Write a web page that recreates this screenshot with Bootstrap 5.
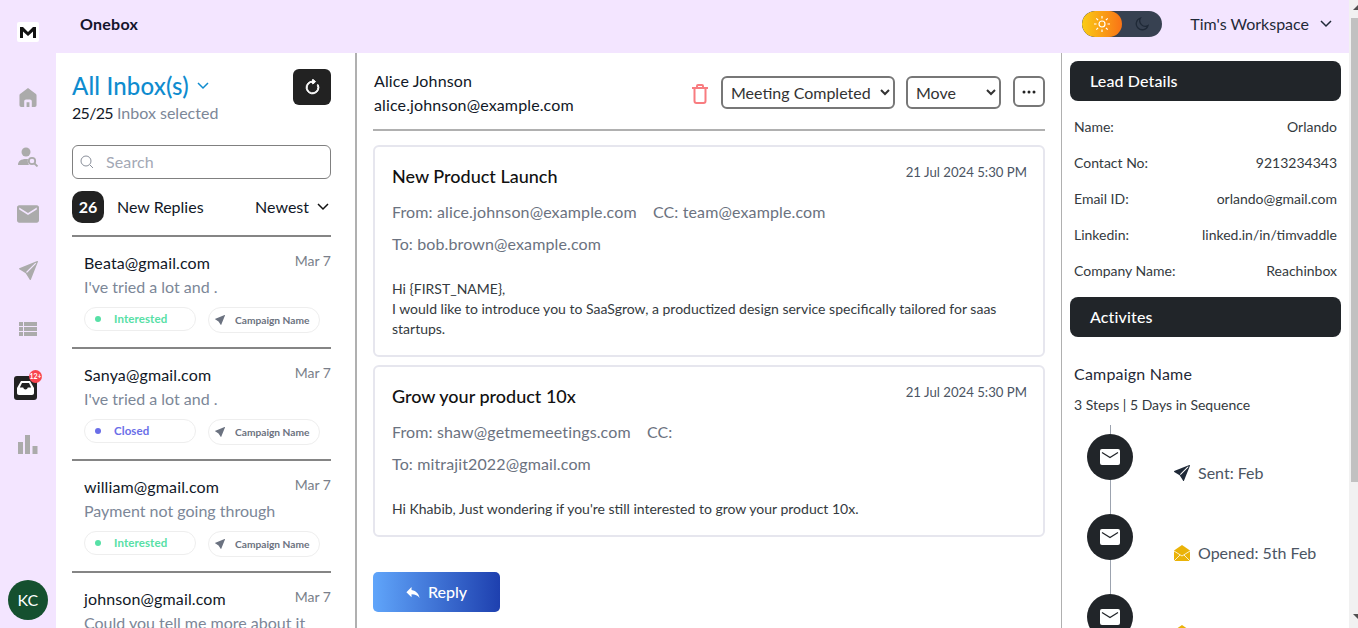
<!DOCTYPE html>
<html lang="en">
<head>
    <meta charset="UTF-8">
    <meta name="viewport" content="width=device-width, initial-scale=1.0">
    <title>Onebox</title>
    <link rel="stylesheet" href="https://cdn.jsdelivr.net/npm/bootstrap@5.3.3/dist/css/bootstrap.min.css">
    <style>
        body { font-family: "Lato", "Liberation Sans", sans-serif; font-size: 16px; line-height: 24px; color: #111827; background: #fff; letter-spacing: .13px; }
        .page-shell { height: 100vh; }
        .rail { width: 56px; background: #f3e5ff; padding-top: 22px; }
        .rail-logo { width: 22px; height: 20px; background: #fff; border-radius: 2px; margin-bottom: 42px; }
        .rail-ic { height: 24px; margin-bottom: 33.500px; color: #ababab; }
        .ic-home { margin-bottom: 35.500px; }
        .ic-person, .ic-mail { margin-bottom: 32.500px; }
        .ic-send, .ic-list { margin-bottom: 34.500px; }
        .rail-inbox { position: relative; width: 23px; height: 24px; background: #222; border-radius: 3px; margin: 2px 0 31px -5px; }
        .rail-badge { position: absolute; top: -6px; right: -5px; width: 13px; height: 13px; border-radius: 50%; background: #f8444f; color: #fff; font-size: 7px; line-height: 13px; text-align: center; letter-spacing: 0; font-weight: 700; }
        .rail-avatar { width: 40px; height: 40px; border-radius: 50%; background: #15502f; color: #fff; font-size: 16px; line-height: 40px; text-align: center; margin-top: auto; margin-bottom: 8px; }
        .topbar { height: 53px; background: #f3e5ff; padding: 0 17px 5px 24px; }
        .brand { font-weight: 700; color: #14142b; letter-spacing: .25px; }
        .mode-toggle { width: 80px; height: 26px; border-radius: 13px; background: #374151; margin-right: 28px; overflow: hidden; }
        .mode-sun { width: 40px; height: 26px; border-radius: 13px; background: linear-gradient(90deg, #facc15, #f97316); }
        .workspace { color: #1f2937; letter-spacing: 0; margin-right: 11px; }

        .inbox-col { width: 301px; padding: 16px 24px 0 16px; border-right: 2px solid #b0b0b0; }
        .inbox-title { font-size: 24px; line-height: 32px; font-weight: 500; color: #0f8ccf; letter-spacing: .15px; margin-top: 1px; margin-bottom: -1px; }
        .refresh-btn { width: 38px; height: 36px; background: #222; border-radius: 6px; border: 0; padding: 0; }
        .inbox-count { letter-spacing: 0; }
        .count-num { letter-spacing: -.7px; }
        .muted-blue { color: #7c8798; }
        .search-box { height: 34px; margin-top: 20px; margin-bottom: 12px; border: 1px solid #808080; border-radius: 6px; padding: 0 7px; color: #a3a8b5; }
        .count-pill { width: 32px; height: 32px; border-radius: 10px; background: #222; color: #fff; line-height: 32px; text-align: center; font-weight: 700; margin-right: 13px; letter-spacing: 0; }
        .sort-row { margin-bottom: 12px; letter-spacing: 0; }
        .sort-chev { margin-left: 8px; margin-right: 2px; }
        .thread { height: 112px; border-top: 2px solid #858585; padding: 14px 0 0 12px; }
        .thread:first-of-type { border-top-color: #b0b0b0; }
        .thread-date { font-size: 14px; color: #7a7f8a; margin-top: -2px; letter-spacing: 0; }
        .thread-sub { color: #7c8798; letter-spacing: 0; }
        .chip { width: 112px; height: 24px; border: 1px solid #eeeeee; border-radius: 13px; font-size: 11.500px; line-height: 22px; font-weight: 700; margin-top: 8px; letter-spacing: .1px; }
        .chip-camp { height: 26px; color: #6b7280; padding-left: 6px; font-size: 10.200px; letter-spacing: 0; }
        .chip-camp svg { margin-right: 10px; }
        .chip-status { padding-left: 10px; }
        .chip-dot { width: 6px; height: 6px; border-radius: 50%; margin-right: 13px; background: currentColor; }
        .st-green { color: #57e0a6; }
        .st-blue { color: #6a6ee8; }

        .mail-col { width: 705px; padding: 16px 16px 0; border-right: 1px solid #b0b0b0; }
        .mail-head { padding-bottom: 12px; padding-left: 1px; border-bottom: 2px solid #b0b0b0; margin-bottom: 14px; height: 62px; }
        .mail-actions { margin-top: 7px; }
        .trash-ic { margin-top: 8px; }
        .act-select { height: 33px; border: 2px solid #777; border-radius: 6px; background: #fff; font: inherit; color: #333; padding: 0 2px 0 4px; }
        .dots-btn { width: 32px; height: 31px; border: 2px solid #777; border-radius: 6px; background: #fff; padding: 0; }
        .mail-card { border: 2px solid #e6e6ee; border-radius: 6px; padding: 18px 16px 16px 17px; margin-bottom: 8px; }
        .mail-title { font-size: 18px; font-weight: 500; color: #111; letter-spacing: 0; margin-top: -1px; margin-bottom: 1px; }
        .mail-date { font-size: 13.200px; color: #4b5563; margin-top: -5px; letter-spacing: 0; }
        .mail-meta { color: #6b7280; margin-top: 11px; margin-bottom: 8px; }
        .mail-meta + .mail-meta { margin-top: 0; }
        .mail-body { font-size: 14px; line-height: 20px; color: #343a40; margin-top: 23px; letter-spacing: 0; }
        .reply-btn { width: 127px; height: 40px; margin-top: 35px; border: 0; border-radius: 5px; background: linear-gradient(90deg, #60a5fa, #1e40af); color: #fff; font-weight: 500; }

        .lead-col { width: 287px; padding: 8px 8px 0; }
        .lead-bar { height: 40px; background: #212529; color: #fff; border-radius: 8px; line-height: 40px; padding-left: 20px; font-weight: 500; }
        .lead-row { height: 36px; padding: 0 4px; font-size: 14px; color: #343a40; letter-spacing: 0; }
        .lead-rows { margin-bottom: 8px; margin-top: 8px; }
        .camp-title { margin: 25px 4px 0; color: #1f2937; letter-spacing: .2px; }
        .camp-steps { margin: 9px 4px 10px; font-size: 14px; line-height: 20px; color: #343a40; letter-spacing: 0; }
        .tl-step { height: 80px; margin-left: 17px; }
        .tl-rail { width: 46px; margin-right: 41px; }
        .tl-line { width: 1px; background: #9ca3af; flex-grow: 1; }
        .tl-line-top { height: 9px; flex-grow: 0; }
        .tl-circle { width: 46px; height: 46px; border-radius: 50%; background: #212529; }
        .tl-label { margin-top: 36px; color: #4b5563; height: 24px; letter-spacing: 0; }

        .scroll-track { width: 9px; background: #f1f1f1; padding-left: 2px; }
        .scroll-thumb { height: 464px; margin-top: 8px; background: #c1c1c1; }
        .scroll-arrow { height: 10px; }
    </style>
</head>
<body>
    <div class="page-shell d-flex overflow-hidden">
        <div class="rail d-flex flex-column align-items-center flex-shrink-0">
            <div class="rail-logo d-flex align-items-center justify-content-center">
                <svg width="16" height="11" viewBox="0 0 16 11"><path d="M0 11V0h3l5 5 5-5h3v11h-3V4.500L8 9 3 4.500V11z" fill="#111"/></svg>
            </div>
            <div class="rail-ic ic-home"><svg width="18" height="19" viewBox="0 0 18 20"><path d="M9 0l8 6c.7.5 1 1 1 2v10c0 1.200-.8 2-2 2h-3v-6c0-1-.6-2-2-2H7c-1.400 0-2 1-2 2v6H2c-1.200 0-2-.8-2-2V8c0-1 .3-1.500 1-2z" fill="currentColor"/><path d="M7.500 15h3v5h-3z" fill="currentColor"/></svg></div>
            <div class="rail-ic ic-person"><svg width="22" height="20" viewBox="0 0 22 20"><circle cx="9" cy="5" r="4.500" fill="currentColor"/><path d="M1 18c0-4 3-6 8-6 1 0 1.500 0 2 .2-.6 2 0 4 1 5.800z" fill="currentColor"/><circle cx="15" cy="14" r="3.200" fill="none" stroke="currentColor" stroke-width="1.800"/><path d="M17.500 16.500l3 3" stroke="currentColor" stroke-width="1.800"/></svg></div>
            <div class="rail-ic ic-mail"><svg width="22" height="22" viewBox="2 4 20 16"><path fill="currentColor" d="M20 4H4c-1.100 0-2 .9-2 2v12c0 1.100.9 2 2 2h16c1.100 0 2-.9 2-2V6c0-1.100-.9-2-2-2zm0 4l-8 5-8-5V6l8 5 8-5v2z"/></svg></div>
            <div class="rail-ic ic-send"><svg width="19" height="19" viewBox="0 0 16 16"><path fill="currentColor" d="M15.964.686a.5.5 0 0 0-.65-.65L.767 5.855H.766l-.452.18a.5.5 0 0 0-.082.887l.41.26.001.002 4.995 3.178 3.178 4.995.002.002.26.41a.5.5 0 0 0 .886-.083l6-15Zm-1.833 1.89L6.637 10.070l-.215-.338a.5.5 0 0 0-.154-.154l-.338-.215 7.494-7.494 1.178-.471-.47 1.178Z"/></svg></div>
            <div class="rail-ic ic-list"><svg width="18" height="14" viewBox="0 0 18 14" fill="currentColor"><rect width="4" height="4"/><rect x="5" width="13" height="4"/><rect y="5" width="4" height="4"/><rect x="5" y="5" width="13" height="4"/><rect y="10" width="4" height="4"/><rect x="5" y="10" width="13" height="4"/></svg></div>
            <div class="rail-inbox d-flex align-items-center justify-content-center">
                <svg width="17" height="14" viewBox="0 0 17 14"><path fill="#fff" d="M4 0h9l4 7v5c0 1.200-.8 2-2 2H2c-1.200 0-2-.8-2-2V7zm1 2L2.800 6.500h3.400c.3 1.300 1.200 2 2.300 2s2-.7 2.300-2h3.400L12 2z"/></svg>
                <span class="rail-badge">12+</span>
            </div>
            <div class="rail-ic"><svg width="20" height="19" viewBox="0 0 20 19" fill="currentColor"><rect y="7" width="5" height="12"/><rect x="7" width="5" height="19"/><rect x="14.500" y="11" width="5" height="8"/></svg></div>
            <div class="rail-avatar">KC</div>
        </div>

        <div class="flex-grow-1 d-flex flex-column" style="min-width:0">
            <div class="topbar d-flex align-items-center justify-content-between flex-shrink-0">
                <span class="brand">Onebox</span>
                <div class="d-flex align-items-center">
                    <div class="mode-toggle d-flex align-items-center">
                        <div class="mode-sun d-flex align-items-center justify-content-center">
                            <svg width="16" height="16" viewBox="0 0 16 16" fill="none" stroke="#fff" stroke-width="1.200"><circle cx="8" cy="8" r="3"/><path d="M8 0v2.500M8 13.500V16M0 8h2.500M13.500 8H16M2.300 2.300l1.800 1.800M11.900 11.900l1.800 1.800M2.300 13.700l1.800-1.800M11.900 4.100l1.800-1.800"/></svg>
                        </div>
                        <div class="flex-grow-1 d-flex justify-content-center">
                            <svg width="14" height="14" viewBox="0 0 14 14" fill="none" stroke="#1f2937" stroke-width="1.300"><path d="M5.500 1a6 6 0 1 0 7.500 7.500A5.500 5.500 0 0 1 5.500 1z"/></svg>
                        </div>
                    </div>
                    <span class="workspace">Tim's Workspace</span>
                    <svg width="12" height="8" viewBox="0 0 12 8" fill="none" stroke="#1f2937" stroke-width="1.500"><path d="M1 1l5 5 5-5"/></svg>
                </div>
            </div>

            <div class="d-flex flex-grow-1 overflow-hidden">
                <!-- lista -->
                <div class="inbox-col flex-shrink-0 overflow-hidden">
                    <div class="d-flex justify-content-between align-items-start">
                        <div>
                            <div class="inbox-title d-flex align-items-center">All Inbox(s)
                                <svg class="ms-2" width="12" height="8" viewBox="0 0 12 8" fill="none" stroke="#0f8ccf" stroke-width="1.500"><path d="M1 1l5 5 5-5"/></svg>
                            </div>
                            <div class="inbox-count"><span class="count-num">25/25</span> <span class="muted-blue">Inbox selected</span></div>
                        </div>
                        <button class="refresh-btn d-flex align-items-center justify-content-center" type="button">
                            <svg width="17" height="17" viewBox="0 0 16 16" fill="#fff" stroke="#fff" stroke-width=".9"><path d="M8 3a5 5 0 1 0 4.546 2.914.5.5 0 0 1 .908-.417A6 6 0 1 1 8 2v1z"/><path d="M8 4.466V.534a.25.25 0 0 1 .41-.192l2.360 1.966c.12.1.12.284 0 .384L8.410 4.658A.25.25 0 0 1 8 4.466z"/></svg>
                        </button>
                    </div>
                    <div class="search-box d-flex align-items-center">
                        <svg class="me-2" width="14" height="14" viewBox="0 0 14 14" fill="none" stroke="#8a8f9a"><circle cx="6" cy="6" r="5"/><path d="M10 10l3 3"/></svg>
                        <span class="ms-1">Search</span>
                    </div>
                    <div class="sort-row d-flex align-items-center">
                        <span class="count-pill">26</span>
                        <span>New Replies</span>
                        <span class="ms-auto">Newest</span>
                        <svg class="sort-chev" width="12" height="8" viewBox="0 0 12 8" fill="none" stroke="#111" stroke-width="1.500"><path d="M1 1l5 5 5-5"/></svg>
                    </div>

                    <div class="thread">
                        <div class="d-flex justify-content-between"><span>Beata@gmail.com</span><span class="thread-date">Mar 7</span></div>
                        <div class="thread-sub">I've tried a lot and .</div>
                        <div class="d-flex gap-2">
                            <div class="chip chip-status st-green d-flex align-items-center"><span class="chip-dot"></span>Interested</div>
                            <div class="chip chip-camp d-flex align-items-center ms-1"><svg width="10" height="10" viewBox="0 0 16 16"><path fill="#6b7280" d="M15.964.686a.5.5 0 0 0-.65-.65L.767 5.855l-.453.18a.5.5 0 0 0-.082.887l5.406 3.440 3.440 5.406a.5.5 0 0 0 .886-.083z"/></svg>Campaign Name</div>
                        </div>
                    </div>
                    <div class="thread">
                        <div class="d-flex justify-content-between"><span>Sanya@gmail.com</span><span class="thread-date">Mar 7</span></div>
                        <div class="thread-sub">I've tried a lot and .</div>
                        <div class="d-flex gap-2">
                            <div class="chip chip-status st-blue d-flex align-items-center"><span class="chip-dot"></span>Closed</div>
                            <div class="chip chip-camp d-flex align-items-center ms-1"><svg width="10" height="10" viewBox="0 0 16 16"><path fill="#6b7280" d="M15.964.686a.5.5 0 0 0-.65-.65L.767 5.855l-.453.18a.5.5 0 0 0-.082.887l5.406 3.440 3.440 5.406a.5.5 0 0 0 .886-.083z"/></svg>Campaign Name</div>
                        </div>
                    </div>
                    <div class="thread">
                        <div class="d-flex justify-content-between"><span>william@gmail.com</span><span class="thread-date">Mar 7</span></div>
                        <div class="thread-sub">Payment not going through</div>
                        <div class="d-flex gap-2">
                            <div class="chip chip-status st-green d-flex align-items-center"><span class="chip-dot"></span>Interested</div>
                            <div class="chip chip-camp d-flex align-items-center ms-1"><svg width="10" height="10" viewBox="0 0 16 16"><path fill="#6b7280" d="M15.964.686a.5.5 0 0 0-.65-.65L.767 5.855l-.453.18a.5.5 0 0 0-.082.887l5.406 3.440 3.440 5.406a.5.5 0 0 0 .886-.083z"/></svg>Campaign Name</div>
                        </div>
                    </div>
                    <div class="thread">
                        <div class="d-flex justify-content-between"><span>johnson@gmail.com</span><span class="thread-date">Mar 7</span></div>
                        <div class="thread-sub">Could you tell me more about it</div>
                    </div>
                </div>

                <!-- levelek -->
                <div class="mail-col flex-shrink-0 overflow-hidden">
                    <div class="mail-head d-flex justify-content-between">
                        <div>
                            <div>Alice Johnson</div>
                            <div>alice.johnson@example.com</div>
                        </div>
                        <div class="mail-actions d-flex align-items-start">
                            <svg class="trash-ic me-2" width="18" height="20" viewBox="0 0 18 20" fill="none" stroke="#f87c80" stroke-width="2"><path d="M1 4h16M6 4V2c0-.6.4-1 1-1h4c.6 0 1 .4 1 1v2M3.500 4v13c0 1 .6 2 2 2h7c1.400 0 2-1 2-2V4"/></svg>
                            <select class="act-select ms-1" style="width:174px"><option>Meeting Completed</option></select>
                            <select class="act-select" style="width:95px;margin-left:11px"><option>Move</option></select>
                            <button class="dots-btn d-flex align-items-center justify-content-center" style="margin-left:12px" type="button">
                                <svg width="14" height="4" viewBox="0 0 14 4" fill="#222"><circle cx="2" cy="2" r="1.500"/><circle cx="7" cy="2" r="1.500"/><circle cx="12" cy="2" r="1.500"/></svg>
                            </button>
                        </div>
                    </div>

                    <div class="mail-card">
                        <div class="d-flex justify-content-between"><span class="mail-title">New Product Launch</span><span class="mail-date">21 Jul 2024 5:30 PM</span></div>
                        <div class="mail-meta">From: alice.johnson@example.com <span class="ms-2 ps-1">CC: team@example.com</span></div>
                        <div class="mail-meta">To: bob.brown@example.com</div>
                        <div class="mail-body">Hi {FIRST_NAME},<br>I would like to introduce you to SaaSgrow, a productized design service specifically tailored for saas startups.</div>
                    </div>
                    <div class="mail-card mb-0">
                        <div class="d-flex justify-content-between"><span class="mail-title">Grow your product 10x</span><span class="mail-date">21 Jul 2024 5:30 PM</span></div>
                        <div class="mail-meta">From: shaw@getmemeetings.com <span class="ms-2 ps-1">CC:</span></div>
                        <div class="mail-meta">To: mitrajit2022@gmail.com</div>
                        <div class="mail-body">Hi Khabib, Just wondering if you're still interested to grow your product 10x.</div>
                    </div>
                    <button class="reply-btn d-flex align-items-center justify-content-center" type="button">
                        <svg class="me-2" width="14" height="11" viewBox="3 5 18 15" fill="#fff"><path d="M10 9V5l-7 7 7 7v-4.100c5 0 8.500 1.600 11 5.100-1-5-4-10-11-11z"/></svg>
                        Reply
                    </button>
                </div>

                <!-- lead -->
                <div class="lead-col flex-shrink-0 overflow-hidden">
                    <div class="lead-bar">Lead Details</div>
                    <div class="lead-rows">
                        <div class="lead-row d-flex align-items-center justify-content-between"><span>Name:</span><span>Orlando</span></div>
                        <div class="lead-row d-flex align-items-center justify-content-between"><span>Contact No:</span><span>9213234343</span></div>
                        <div class="lead-row d-flex align-items-center justify-content-between"><span>Email ID:</span><span>orlando@gmail.com</span></div>
                        <div class="lead-row d-flex align-items-center justify-content-between"><span>Linkedin:</span><span>linked.in/in/timvaddle</span></div>
                        <div class="lead-row d-flex align-items-center justify-content-between"><span>Company Name:</span><span>Reachinbox</span></div>
                    </div>
                    <div class="lead-bar">Activites</div>
                    <div class="camp-title">Campaign Name</div>
                    <div class="camp-steps">3 Steps | 5 Days in Sequence</div>

                    <div class="tl-step d-flex">
                        <div class="tl-rail d-flex flex-column align-items-center">
                            <div class="tl-line tl-line-top"></div>
                            <div class="tl-circle d-flex align-items-center justify-content-center"><svg width="20" height="16" viewBox="0 0 20 16"><rect width="20" height="16" rx="2" fill="#fff"/><path d="M2 3.500l8 5 8-5" fill="none" stroke="#212529" stroke-width="1.300"/></svg></div>
                            <div class="tl-line"></div>
                        </div>
                        <div class="tl-label d-flex align-items-center">
                            <svg class="me-2" width="16" height="16" viewBox="0 0 16 16"><path fill="#1f2937" d="M15.964.686a.5.5 0 0 0-.65-.65L.767 5.855H.766l-.452.18a.5.5 0 0 0-.082.887l.41.26.001.002 4.995 3.178 3.178 4.995.002.002.26.41a.5.5 0 0 0 .886-.083l6-15Zm-1.833 1.890L6.637 10.070l-.215-.338a.5.5 0 0 0-.154-.154l-.338-.215 7.494-7.494 1.178-.471-.47 1.178Z"/></svg>
                            Sent: Feb
                        </div>
                    </div>
                    <div class="tl-step d-flex">
                        <div class="tl-rail d-flex flex-column align-items-center">
                            <div class="tl-line tl-line-top"></div>
                            <div class="tl-circle d-flex align-items-center justify-content-center"><svg width="20" height="16" viewBox="0 0 20 16"><rect width="20" height="16" rx="2" fill="#fff"/><path d="M2 3.500l8 5 8-5" fill="none" stroke="#212529" stroke-width="1.300"/></svg></div>
                            <div class="tl-line"></div>
                        </div>
                        <div class="tl-label d-flex align-items-center">
                            <svg class="me-2" width="16" height="16" viewBox="0 0 16 16"><path fill="#eab308" d="M8 0l8 5.500V16H0V5.500z"/><path d="M0 6l8 5 8-5M0 16l6-6M16 16l-6-6" fill="none" stroke="#fff" stroke-width=".8"/></svg>
                            Opened: 5th Feb
                        </div>
                    </div>
                    <div class="tl-step d-flex">
                        <div class="tl-rail d-flex flex-column align-items-center">
                            <div class="tl-line tl-line-top"></div>
                            <div class="tl-circle d-flex align-items-center justify-content-center"><svg width="20" height="16" viewBox="0 0 20 16"><rect width="20" height="16" rx="2" fill="#fff"/><path d="M2 3.500l8 5 8-5" fill="none" stroke="#212529" stroke-width="1.300"/></svg></div>
                            <div class="tl-line"></div>
                        </div>
                        <div class="tl-label d-flex align-items-center">
                            <svg class="me-2" width="16" height="16" viewBox="0 0 16 16"><path fill="#eab308" d="M8 0l8 5.500V16H0V5.500z"/></svg>
                            Opened: 5th Feb
                        </div>
                    </div>
                </div>
            </div>
        </div>

        <div class="scroll-track d-flex flex-column flex-shrink-0">
            <div class="scroll-arrow"><svg class="d-block" width="7" height="10" viewBox="0 0 7 10"><path d="M7 5v5H2z" fill="#505050"/></svg></div>
            <div class="scroll-thumb"></div>
            <div class="scroll-arrow mt-auto mb-1"><svg class="d-block" width="7" height="10" viewBox="0 0 7 10"><path d="M2 0h5v5z" fill="#505050"/></svg></div>
        </div>
    </div>

    <script src="https://cdn.jsdelivr.net/npm/bootstrap@5.3.3/dist/js/bootstrap.bundle.min.js"></script>
</body>
</html>
